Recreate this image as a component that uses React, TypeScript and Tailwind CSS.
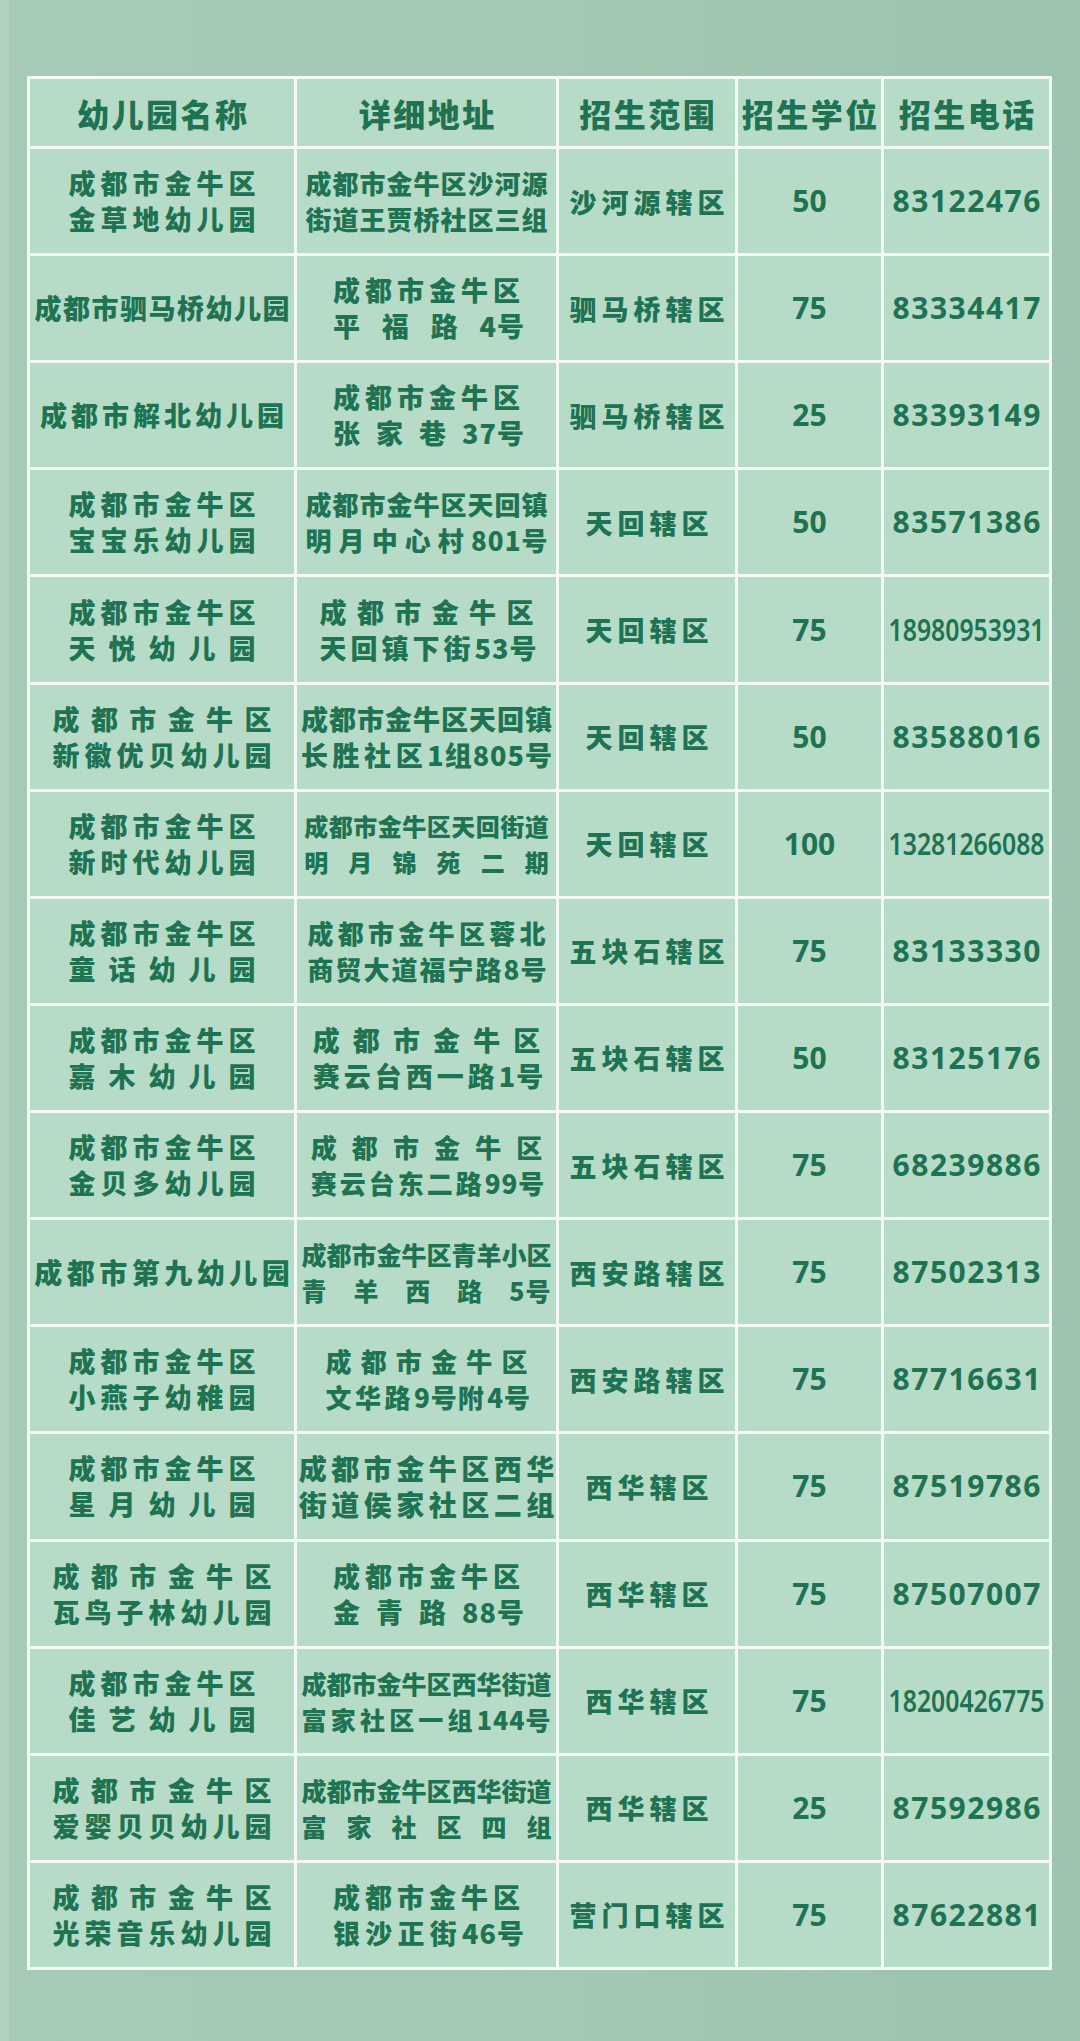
import React from 'react';

// 字体：中文用 Noto Sans CJK SC，数字用 Noto Sans
const cjk = "font-['Noto_Sans_CJK_SC',sans-serif] font-black";
const num = "font-['Noto_Sans','Noto_Sans_CJK_SC',sans-serif]";

// 常用字号/字距（pl 抵消末字后的字距，使居中准确）
const A = 'text-[27px] tracking-[5px] pl-[5px]';
const B = 'text-[27px] tracking-[4px] pl-[4px]';
const C = 'text-[27px] tracking-[1.5px] pl-[1.5px]';
const D = 'text-[28px] tracking-[4.5px] pl-[4.5px]';
const E = 'text-[26px] tracking-[3px] pl-[3px]';
const F = 'text-[26px] tracking-[2px] pl-[2px]';
const G = 'text-[26px] tracking-[1px] pl-[1px]';
const H = 'text-[27px] tracking-[1px] pl-[1px]';
const I = 'text-[24px] tracking-[0.5px] pl-[0.5px]';
const J = 'text-[25px] tracking-[0px]';
const K = 'text-[26px] tracking-[3.5px] pl-[3.5px]';

type Row = {
  name: string[];
  nameCls: string;
  addr: string[];
  addrCls: string;
  range: string;
  seats: string;
  phone: string;
};

const rows: Row[] = [
  { name: ['成都市金牛区', '金草地幼儿园'], nameCls: A, addr: ['成都市金牛区沙河源', '街道王贾桥社区三组'], addrCls: G, range: '沙河源辖区', seats: '50', phone: '83122476' },
  { name: ['成都市驷马桥幼儿园'], nameCls: C, addr: ['成都市金牛区', '平福路4号'], addrCls: A, range: '驷马桥辖区', seats: '75', phone: '83334417' },
  { name: ['成都市解北幼儿园'], nameCls: B, addr: ['成都市金牛区', '张家巷37号'], addrCls: A, range: '驷马桥辖区', seats: '25', phone: '83393149' },
  { name: ['成都市金牛区', '宝宝乐幼儿园'], nameCls: A, addr: ['成都市金牛区天回镇', '明月中心村801号'], addrCls: G, range: '天回辖区', seats: '50', phone: '83571386' },
  { name: ['成都市金牛区', '天悦幼儿园'], nameCls: A, addr: ['成都市金牛区', '天回镇下街53号'], addrCls: B, range: '天回辖区', seats: '75', phone: '18980953931' },
  { name: ['成都市金牛区', '新徽优贝幼儿园'], nameCls: A, addr: ['成都市金牛区天回镇', '长胜社区1组805号'], addrCls: H, range: '天回辖区', seats: '50', phone: '83588016' },
  { name: ['成都市金牛区', '新时代幼儿园'], nameCls: A, addr: ['成都市金牛区天回街道', '明月锦苑二期'], addrCls: I, range: '天回辖区', seats: '100', phone: '13281266088' },
  { name: ['成都市金牛区', '童话幼儿园'], nameCls: A, addr: ['成都市金牛区蓉北', '商贸大道福宁路8号'], addrCls: F, range: '五块石辖区', seats: '75', phone: '83133330' },
  { name: ['成都市金牛区', '嘉木幼儿园'], nameCls: A, addr: ['成都市金牛区', '赛云台西一路1号'], addrCls: B, range: '五块石辖区', seats: '50', phone: '83125176' },
  { name: ['成都市金牛区', '金贝多幼儿园'], nameCls: A, addr: ['成都市金牛区', '赛云台东二路99号'], addrCls: E, range: '五块石辖区', seats: '75', phone: '68239886' },
  { name: ['成都市第九幼儿园'], nameCls: D, addr: ['成都市金牛区青羊小区', '青羊西路5号'], addrCls: J, range: '西安路辖区', seats: '75', phone: '87502313' },
  { name: ['成都市金牛区', '小燕子幼稚园'], nameCls: A, addr: ['成都市金牛区', '文华路9号附4号'], addrCls: K, range: '西安路辖区', seats: '75', phone: '87716631' },
  { name: ['成都市金牛区', '星月幼儿园'], nameCls: A, addr: ['成都市金牛区西华', '街道侯家社区二组'], addrCls: D, range: '西华辖区', seats: '75', phone: '87519786' },
  { name: ['成都市金牛区', '瓦鸟子林幼儿园'], nameCls: A, addr: ['成都市金牛区', '金青路88号'], addrCls: A, range: '西华辖区', seats: '75', phone: '87507007' },
  { name: ['成都市金牛区', '佳艺幼儿园'], nameCls: A, addr: ['成都市金牛区西华街道', '富家社区一组144号'], addrCls: J, range: '西华辖区', seats: '75', phone: '18200426775' },
  { name: ['成都市金牛区', '爱婴贝贝幼儿园'], nameCls: A, addr: ['成都市金牛区西华街道', '富家社区四组'], addrCls: J, range: '西华辖区', seats: '25', phone: '87592986' },
  { name: ['成都市金牛区', '光荣音乐幼儿园'], nameCls: A, addr: ['成都市金牛区', '银沙正街46号'], addrCls: A, range: '营门口辖区', seats: '75', phone: '87622881' },
];

const headers = ['幼儿园名称', '详细地址', '招生范围', '招生学位', '招生电话'];

const cell = 'flex items-center justify-center bg-[#b6dbc6] text-[#1d7352] font-bold';

// 数字和紧跟的“号/组”连在一起，不参与分散对齐
const Line: React.FC<{ text: string }> = ({ text }) => (
  <>
    {text.split(/(\d+[号组]?)/).map((part, i) =>
      /\d/.test(part) ? (
        <span key={i} className="inline-block tracking-[1px]">
          {part}
        </span>
      ) : (
        part
      ),
    )}
  </>
);

// 两端对齐的多行文字（分散对齐）
const Lines: React.FC<{ lines: string[]; cls: string }> = ({ lines, cls }) => (
  <div className={`inline-block ${cjk} ${cls}`}>
    {lines.map((l, i) => (
      <div key={i} className="leading-[36px] text-justify [text-align-last:justify] [text-justify:inter-character] whitespace-nowrap">
        <Line text={l} />
      </div>
    ))}
  </div>
);

const Phone: React.FC<{ value: string }> = ({ value }) =>
  value.length > 8 ? (
    <span className={`inline-block ${num} text-[31px] font-semibold leading-none scale-x-[0.8]`}>{value}</span>
  ) : (
    <span className={`${num} text-[30px] tracking-[1.5px] pl-[1.5px] leading-none`}>{value}</span>
  );

export default function App() {
  return (
    <div className="flex h-[2041px] w-[1080px] bg-linear-to-r from-[#a7cab7] via-[#a3c8b3] to-[#9bc3ad]">
      <div className="w-[9px] bg-[#b1d1c0]" />
      <div className="pl-[18px] pt-[76px]">
        <div className="grid h-[1894px] w-[1025px] grid-cols-[264px_259px_176px_143px_165px] grid-rows-[67px_repeat(17,minmax(0,1fr))] gap-[3px] bg-[#f3faf6] p-[3px]">
          {headers.map((h) => (
            <div key={h} className={cell}>
              <span className={`${cjk} whitespace-nowrap text-[32px] tracking-[2.5px] pl-[2.5px] leading-none`}>{h}</span>
            </div>
          ))}
          {rows.map((r, i) => (
            <React.Fragment key={i}>
              <div className={cell}>
                <Lines lines={r.name} cls={r.nameCls} />
              </div>
              <div className={cell}>
                <Lines lines={r.addr} cls={r.addrCls} />
              </div>
              <div className={cell}>
                <span className={`${cjk} text-[27px] tracking-[5px] pl-[5px] leading-none`}>{r.range}</span>
              </div>
              <div className={cell}>
                <span className={`${num} text-[30px] leading-none`}>{r.seats}</span>
              </div>
              <div className={cell}>
                <Phone value={r.phone} />
              </div>
            </React.Fragment>
          ))}
        </div>
      </div>
    </div>
  );
}
